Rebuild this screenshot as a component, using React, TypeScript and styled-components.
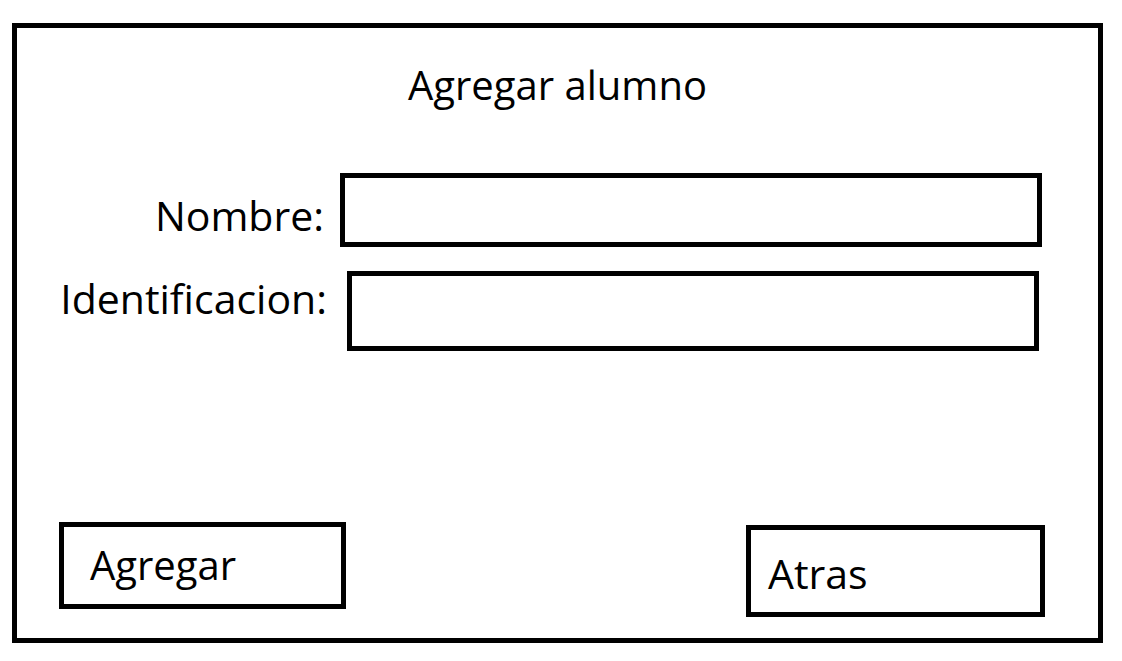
import React from "react";
import styled, { createGlobalStyle } from "styled-components";

const GlobalStyle = createGlobalStyle`
  html, body {
    margin: 0;
    padding: 0;
    background: #ffffff;
  }
  body {
    font-family: "Open Sans", "Noto Sans", sans-serif;
    color: #000000;
  }
`;

const Page = styled.div`
  padding: 23px 0 0 12px;
`;

const Frame = styled.div`
  display: flex;
  flex-direction: column;
  box-sizing: border-box;
  width: 1091px;
  height: 620px;
  border: 5px solid #000;
`;

const Title = styled.h1`
  margin: 37px 0 0;
  font-size: 40px;
  font-weight: 400;
  line-height: 40px;
  text-align: center;
`;

const Form = styled.div`
  display: flex;
  flex-direction: column;
  margin-top: 68px;
`;

const Row = styled.div<{ $gap?: number }>`
  display: flex;
  align-items: flex-start;
  margin-top: ${(p) => p.$gap ?? 0}px;
`;

const Label = styled.label<{ $top: number; $trim: number }>`
  box-sizing: border-box;
  width: 310px;
  margin-top: ${(p) => p.$top}px;
  padding-right: ${(p) => p.$trim}px;
  font-size: 41px;
  line-height: 41px;
  text-align: right;
  white-space: nowrap;
`;

const Field = styled.input<{ $offset: number; $w: number; $h: number }>`
  box-sizing: border-box;
  margin: 0 0 0 ${(p) => p.$offset}px;
  padding: 0 12px;
  width: ${(p) => p.$w}px;
  height: ${(p) => p.$h}px;
  border: 5px solid #000;
  border-radius: 0;
  background: #fff;
  outline: none;
  font-family: inherit;
  font-size: 28px;
`;

const Footer = styled.div`
  display: flex;
  justify-content: space-between;
  align-items: flex-start;
  margin-top: auto;
  padding: 0 53px 21px 42px;
`;

const Button = styled.button<{
  $w: number;
  $h: number;
  $top: number;
  $left: number;
  $pt: number;
  $size: number;
}>`
  display: flex;
  align-items: flex-start;
  justify-content: flex-start;
  box-sizing: border-box;
  width: ${(p) => p.$w}px;
  height: ${(p) => p.$h}px;
  margin: ${(p) => p.$top}px 0 0;
  padding: ${(p) => p.$pt}px 0 0 ${(p) => p.$left}px;
  border: 5px solid #000;
  border-radius: 0;
  background: #fff;
  color: #000;
  font-family: inherit;
  font-size: ${(p) => p.$size}px;
  line-height: ${(p) => p.$size}px;
  text-align: left;
  cursor: pointer;
`;

const App = () => {
  return (
    <>
      <GlobalStyle />
      <Page>
        <Frame>
          <Title>Agregar alumno</Title>
          <Form>
            <Row>
              <Label $top={22} $trim={3}>
                Nombre:
              </Label>
              <Field $offset={13} $w={702} $h={74} />
            </Row>
            <Row $gap={24}>
              <Label $top={7} $trim={0}>
                Identificacion:
              </Label>
              <Field $offset={20} $w={692} $h={80} />
            </Row>
          </Form>
          <Footer>
            <Button $w={287} $h={87} $top={0} $left={26} $pt={18} $size={40}>
              Agregar
            </Button>
            <Button $w={299} $h={92} $top={3} $left={17} $pt={23} $size={41}>
              Atras
            </Button>
          </Footer>
        </Frame>
      </Page>
    </>
  );
};

export default App;
